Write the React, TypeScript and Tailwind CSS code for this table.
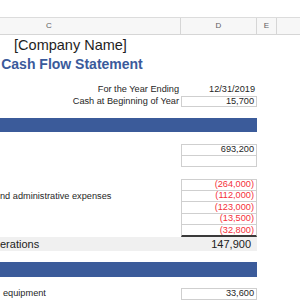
import React from "react";

const font = { fontFamily: '"Liberation Sans", Arial, sans-serif' };

function Row({
  h,
  left,
  d,
  className = "",
}: {
  h: string;
  left?: React.ReactNode;
  d?: React.ReactNode;
  className?: string;
}) {
  return (
    <div className={`grid grid-cols-[181px_76px_20px_1fr] ${h} ${className}`}>
      <div className="flex items-center overflow-hidden whitespace-nowrap">{left}</div>
      <div className="flex">{d}</div>
      <div />
      <div />
    </div>
  );
}

function Box({
  children,
  red,
  top = true,
  thick,
}: {
  children?: React.ReactNode;
  red?: boolean;
  top?: boolean;
  thick?: boolean;
}) {
  return (
    <div
      className={`flex-1 flex items-center justify-end pr-[2px] text-[9.2px] leading-none border-x border-[#cfcfcf] ${
        top ? "border-t" : ""
      } ${thick ? "border-b-2 border-b-[#3a3a3a]" : "border-b"} ${
        red ? "text-[#f5303a]" : "text-[#262626]"
      }`}
    >
      {children}
    </div>
  );
}

export default function App() {
  return (
    <div style={font} className="w-[300px] h-[300px] overflow-hidden bg-white text-[#262626]">
      {/* top strip */}
      <div className="h-[18px] bg-white border-b border-[#dcdcdc]" />
      {/* column headers */}
      <div className="grid grid-cols-[181px_76px_20px_1fr] h-[17px] bg-[#f7f7f7] border-b border-[#d6d6d6] text-[8px] text-[#606060]">
        <div className="flex items-center pl-[46px] border-r border-[#d6d6d6]">C</div>
        <div className="flex items-center justify-center border-r border-[#d6d6d6]">D</div>
        <div className="flex items-center justify-center border-r border-[#d6d6d6]">E</div>
        <div />
      </div>
      {/* company name */}
      <div className="h-[20px] flex items-center">
        <div className="w-[141px] text-center text-[14.5px] leading-none text-[#1e1e1e]">[Company Name]</div>
      </div>
      {/* title */}
      <div className="h-[17px] flex items-center">
        <div className="w-[144px] text-center text-[14px] leading-none font-bold text-[#3a5a9b] whitespace-nowrap">
          Cash Flow Statement
        </div>
      </div>
      <div className="h-[12px]" />
      <Row
        h="h-[12px]"
        left={<div className="w-full text-right pr-[2px] text-[9.2px] leading-none">For the Year Ending</div>}
        d={<div className="flex-1 flex items-center justify-end pr-[2px] text-[9.2px] leading-none">12/31/2019</div>}
      />
      <Row
        h="h-[11px]"
        left={<div className="w-full text-right pr-[2px] text-[9.2px] leading-none">Cash at Beginning of Year</div>}
        d={<Box>15,700</Box>}
      />
      <div className="h-[11px]" />
      <div className="h-[14px] w-[257px] bg-[#3b5b9a]" />
      <div className="h-[12px]" />
      <Row h="h-[11.5px]" d={<Box>693,200</Box>} />
      <Row h="h-[11.5px]" d={<Box top={false} />} />
      <div className="h-[12px]" />
      <Row h="h-[11.6px]" d={<Box red>(264,000)</Box>} />
      <Row
        h="h-[11.6px]"
        left={<div className="text-[9.2px] leading-none">nd administrative expenses</div>}
        d={<Box red top={false}>(112,000)</Box>}
      />
      <Row h="h-[11.6px]" d={<Box red top={false}>(123,000)</Box>} />
      <Row h="h-[11.6px]" d={<Box red top={false}>(13,500)</Box>} />
      <Row h="h-[11.6px]" d={<Box red top={false} thick>(32,800)</Box>} />
      <div className="h-[14.5px] w-[257px] bg-[#f0f0f0] flex items-center text-[11px] leading-none text-[#222]">
        <div className="w-[181px]">erations</div>
        <div className="w-[76px] text-right pr-[6px]">147,900</div>
      </div>
      <div className="h-[10.5px]" />
      <div className="h-[15px] w-[257px] bg-[#3b5b9a]" />
      <div className="h-[11px]" />
      <Row
        h="h-[12px]"
        left={<div className="pl-[3px] text-[9.2px] leading-none">equipment</div>}
        d={<Box>33,600</Box>}
      />
    </div>
  );
}
